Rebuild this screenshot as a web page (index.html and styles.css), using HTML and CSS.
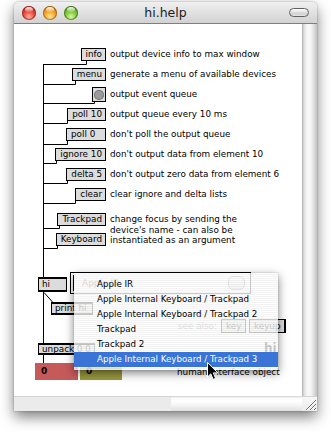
FILE: index.html
```html
<!DOCTYPE html>
<html>
<head>
<meta charset="utf-8">
<title>hi.help</title>
<link rel="stylesheet" href="styles.css">
</head>
<body>
<div class="window">
  <div class="titlebar">
    <div class="lights">
      <span class="light red"></span>
      <span class="light yellow"></span>
      <span class="light green"></span>
    </div>
    <div class="title">hi.help</div>
    <div class="tb-right"><span class="toolbar-btn"></span></div>
  </div>
  <div class="main">
    <div class="canvas">
      <svg class="wires" width="288" height="372" viewBox="0 0 288 372">
        <path d="M29.5 40 V253 M29.5 268 V319 M29.5 330 V339
                 M29 40.5 H72.5 V37
                 M29 60.5 H61.5 V57
                 M29 79.5 H80.5 V78
                 M29 99.5 H53.5 V97
                 M29 120.5 H53.5 V117
                 M29 139.5 H42.5 V137
                 M29 159.5 H53.5 V157
                 M29 179.5 H61.5 V177
                 M29 204.5 H45.5 V202
                 M29 224.5 H43.5 V222
                 M30 268.5 L38.5 278" />
      </svg>
      <div class="rows">
        <div class="row"><span class="msg">info</span><span class="cmt">output device info to max window</span></div>
        <div class="row"><span class="msg">menu</span><span class="cmt">generate a menu of available devices</span></div>
        <div class="row row-bang"><span class="bang"></span><span class="cmt">output event queue</span></div>
        <div class="row"><span class="msg">poll 10</span><span class="cmt">output queue every 10 ms</span></div>
        <div class="row"><span class="msg msg-w40">poll 0</span><span class="cmt">don't poll the output queue</span></div>
        <div class="row"><span class="msg">ignore 10</span><span class="cmt">don't output data from element 10</span></div>
        <div class="row"><span class="msg">delta 5</span><span class="cmt">don't output zero data from element 6</span></div>
        <div class="row"><span class="msg">clear</span><span class="cmt">clear ignore and delta lists</span></div>
        <div class="group">
          <div class="stack"><span class="msg">Trackpad</span><span class="msg">Keyboard</span></div>
          <div class="cmt cmt-multi">change focus by sending the<br>device's name - can also be<br>instantiated as an argument</div>
        </div>
      </div>

      <div class="node obj n-hi">hi</div>
      <div class="node n-umenu"><div class="umenu-field"><span class="umenu-text">Apple IR</span><span class="umenu-knob"></span></div></div>
      <div class="node obj n-print">print hi</div>
      <div class="node obj n-unpack">unpack 0 0</div>
      <div class="node num n-red">0</div>
      <div class="node num n-olive">0</div>
      <div class="node see-also"><span class="see-label">see also:</span><span class="msg msg-k">key</span><span class="msg msg-k msg-ku">keyup</span></div>
      <div class="node n-title">hi</div>
      <div class="node n-desc">human interface object</div>

      <div class="popup">
        <div class="item">Apple IR</div>
        <div class="item">Apple Internal Keyboard / Trackpad</div>
        <div class="item">Apple Internal Keyboard / Trackpad 2</div>
        <div class="item">Trackpad</div>
        <div class="item">Trackpad 2</div>
        <div class="item selected">Apple Internal Keyboard / Trackpad 3</div>
      </div>
      <svg class="cursor" width="13" height="20" viewBox="0 0 13 20">
        <path d="M1.5 1.5 V16 L4.8 12.8 L7.2 18.4 L9.6 17.3 L7.3 11.9 H11.8 Z" />
      </svg>
    </div>
    <div class="vscroll"></div>
  </div>
  <div class="statusbar">
    <div class="status-info"></div>
    <div class="hscroll"></div>
    <div class="grow">
      <svg width="15" height="15" viewBox="0 0 15 15">
        <path class="g-dark" d="M4 14 L14 4 M8 14 L14 8 M12 14 L14 12" />
        <path class="g-light" d="M5 14 L14 5 M9 14 L14 9 M13 14 L14 13" />
      </svg>
    </div>
  </div>
</div>
</body>
</html>
```

FILE: styles.css
```css
* { box-sizing: border-box; }
html, body { margin: 0; padding: 0; }
body {
  width: 331px;
  height: 434px;
  overflow: hidden;
  background: #ffffff;
  font-family: "DejaVu Sans", "Liberation Sans", sans-serif;
}

.window {
  position: relative;
  margin: 2px 0 0 14px;
  width: 303px;
  height: 409px;
  display: flex;
  flex-direction: column;
  background: #fff;
  border-radius: 5px 5px 0 0;
  box-shadow: 0 6px 14px rgba(0, 0, 0, 0.5), 0 0 2px rgba(0, 0, 0, 0.35);
}

/* ---------- title bar ---------- */
.titlebar {
  flex: none;
  height: 22px;
  display: grid;
  grid-template-columns: 1fr auto 1fr;
  align-items: center;
  padding: 0 8px;
  background: linear-gradient(#f0f0f0, #d2d2d2);
  border-bottom: 1px solid #7f7f7f;
  border-radius: 5px 5px 0 0;
}
.lights { display: flex; gap: 7px; }
.light {
  position: relative;
  width: 14px;
  height: 14px;
  border-radius: 50%;
}
.light::after {
  content: "";
  position: absolute;
  left: 3px;
  top: 1px;
  width: 8px;
  height: 5px;
  border-radius: 50%;
  background: linear-gradient(rgba(255,255,255,0.95), rgba(255,255,255,0.15));
}
.red {
  background: radial-gradient(circle at 50% 78%, #ffb4a4 0%, #f05a4c 35%, #c8281f 72%, #8a1a14 100%);
  box-shadow: inset 0 0 0 1px rgba(110, 25, 18, 0.55);
}
.yellow {
  background: radial-gradient(circle at 50% 78%, #ffe7a0 0%, #f6b23a 35%, #dc8410 72%, #9a5a06 100%);
  box-shadow: inset 0 0 0 1px rgba(120, 70, 5, 0.55);
}
.green {
  background: radial-gradient(circle at 50% 78%, #dcf7a8 0%, #8fd146 35%, #5aa424 72%, #356e12 100%);
  box-shadow: inset 0 0 0 1px rgba(40, 85, 15, 0.55);
}
.title {
  font-family: "DejaVu Sans", sans-serif;
  font-size: 12.5px;
  color: #1a1a1a;
}
.tb-right { display: flex; justify-content: flex-end; }
.toolbar-btn {
  width: 20px;
  height: 9px;
  border-radius: 5px;
  border: 1px solid #616161;
  background: linear-gradient(#ffffff, #d0d0d0 70%, #e6e6e6);
}

/* ---------- main area ---------- */
.main { flex: 1; min-height: 0; display: flex; }
.canvas {
  flex: 1;
  position: relative;
  overflow: hidden;
  background: #fff;
  font-size: 8.8px;
  color: #000;
}
.vscroll {
  flex: none;
  width: 15px;
  background: linear-gradient(to right, #a4a4a4 0, #cdcdcd 1px, #e8e8e8 3px, #fafafa 6px, #f4f4f4 9px, #dcdcdc 12px, #c2c2c2 15px);
}

.wires {
  position: absolute;
  left: 0;
  top: 0;
}
.wires path {
  fill: none;
  stroke: #000;
  stroke-width: 1;
}

/* rows of message boxes + comments */
.rows {
  position: relative;
  padding-top: 24px;
  display: flex;
  flex-direction: column;
}
.row {
  display: grid;
  grid-template-columns: 92px 1fr;
  column-gap: 4px;
  height: 20px;
  align-items: start;
}
.row > .msg, .row > .bang { justify-self: end; }
.row-bang .bang { margin-top: -1px; }
.cmt {
  white-space: nowrap;
  line-height: 13px;
}
.group {
  margin-top: 5px;
  display: grid;
  grid-template-columns: 92px 1fr;
  column-gap: 4px;
}
.stack {
  display: flex;
  flex-direction: column;
  align-items: flex-end;
  gap: 7px;
}
.cmt-multi {
  line-height: 10.6px;
  padding-top: 1px;
}

.msg {
  display: block;
  height: 13px;
  border: 1px solid #000;
  background: #dcdcdc;
  padding: 0 3px 0 4px;
  line-height: 11px;
  white-space: nowrap;
}
.msg-w40 { min-width: 40px; }

.bang {
  display: flex;
  align-items: center;
  justify-content: center;
  width: 14px;
  height: 15px;
  border: 1px solid #000;
  background: #dcdcdc;
}
.bang::after {
  content: "";
  width: 10px;
  height: 10px;
  border-radius: 50%;
  background: #9a9a9a;
  box-shadow: inset 0 0 0 1px #7a7a7a;
}

/* ---------- patch nodes (free canvas) ---------- */
.node { position: absolute; white-space: nowrap; }
.obj {
  border: 1px solid #000;
  border-top-width: 2px;
  border-bottom-width: 2px;
  background: #dcdcdc;
  padding: 0 3px;
  line-height: 10px;
}
.n-hi { left: 24px; top: 253px; width: 29px; height: 15px; line-height: 11px; }
.n-print { left: 37px; top: 278px; height: 13px; line-height: 9px; padding-right: 5px; }
.n-unpack { left: 24px; top: 319px; height: 12px; line-height: 8px; }

.n-umenu {
  left: 56px;
  top: 248px;
  width: 181px;
  height: 22px;
  border: 1px solid #000;
  background: #fff;
  padding: 2px;
}
.umenu-field {
  height: 100%;
  display: flex;
  align-items: center;
  justify-content: space-between;
  border-left: 1px solid #000;
  padding: 0 3px 0 8px;
  font-size: 9px;
  color: #555;
}
.umenu-knob {
  width: 17px;
  height: 14px;
  border-radius: 5px;
  border: 1px solid #888;
  background: linear-gradient(#fafafa, #d8d8d8);
}

.num {
  height: 17px;
  padding-left: 6px;
  font-weight: bold;
  font-size: 9px;
  line-height: 17px;
}
.n-red { left: 21px; top: 339px; width: 43px; background: #c65a5a; }
.n-olive { left: 66px; top: 339px; width: 42px; background: #9a9a3e; }

.see-also {
  left: 164px;
  top: 295px;
  display: flex;
  align-items: center;
  gap: 3px;
}
.see-label { color: #777; margin-right: 1px; }
.msg-k { height: 14px; line-height: 12px; min-width: 25px; }
.msg-ku { border-right-width: 2px; min-width: 36px; }

.n-title {
  left: 250px;
  top: 317px;
  font-size: 12px;
  font-weight: bold;
}
.n-desc { left: 163px; top: 343px; }

/* ---------- popup menu (overlay) ---------- */
.popup {
  position: absolute;
  left: 60px;
  top: 249px;
  width: 204px;
  padding: 4px 0 3px;
  background: repeating-linear-gradient(rgba(252, 252, 252, 0.8) 0 1px, rgba(240, 240, 240, 0.8) 1px 2px);
  box-shadow: 0 3px 9px rgba(0, 0, 0, 0.5), 0 0 1px rgba(0, 0, 0, 0.3);
  font-family: "DejaVu Sans", sans-serif;
  font-size: 8.7px;
}
.item {
  height: 15px;
  line-height: 15px;
  padding-left: 23px;
  color: #000;
  white-space: nowrap;
}
.item.selected {
  background: #3a74d6;
  color: #fff;
}

.cursor {
  position: absolute;
  left: 192px;
  top: 337px;
}
.cursor path {
  fill: #000;
  stroke: #fff;
  stroke-width: 1;
  stroke-linejoin: miter;
}

/* ---------- bottom bar ---------- */
.statusbar { flex: none; height: 15px; display: flex; }
.status-info {
  width: 157px;
  background: #ebebeb;
  border-top: 1px solid #d2d2d2;
}
.hscroll {
  flex: 1;
  background: linear-gradient(#cfcfcf 0, #f9f9f9 2px, #ffffff 5px, #f2f2f2 10px, #e0e0e0 15px);
}
.grow {
  width: 15px;
  background: linear-gradient(#f7f7f7, #ebebeb);
  border-top: 1px solid #d2d2d2;
}
.grow svg { display: block; margin-top: -1px; }
.g-dark { stroke: #6f6f6f; stroke-width: 1; fill: none; }
.g-light { stroke: #ffffff; stroke-width: 1; fill: none; }
```
